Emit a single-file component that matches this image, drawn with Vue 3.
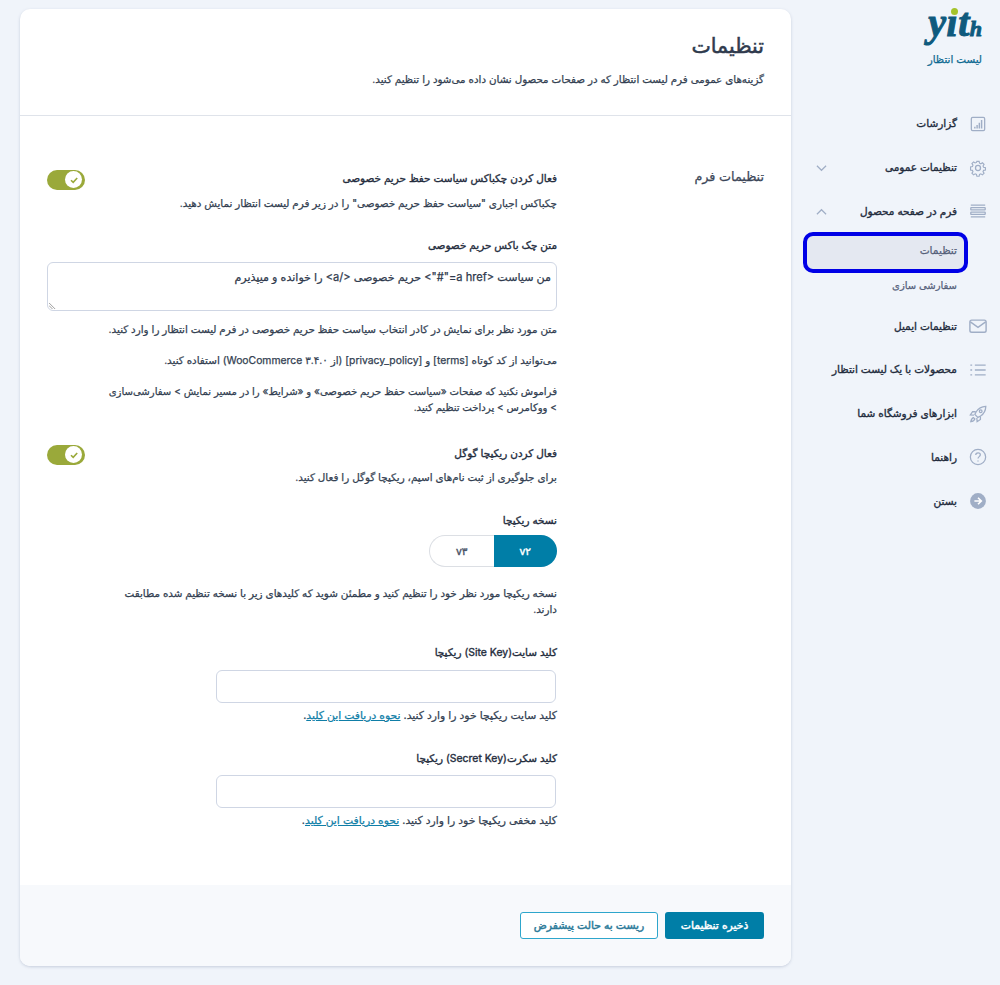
<script setup>
const menu = [
  { t: 'گزارشات', i: 'chart' },
  { t: 'تنظیمات عمومی', i: 'gear', chev: 'down' },
  { t: 'فرم در صفحه محصول', i: 'rows', chev: 'up', open: true },
  { t: 'تنظیمات ایمیل', i: 'mail' },
  { t: 'محصولات با یک لیست انتظار', i: 'list' },
  { t: 'ابزارهای فروشگاه شما', i: 'rocket' },
  { t: 'راهنما', i: 'help' },
  { t: 'بستن', i: 'close' }
]
</script>

<template>
  <div class="page" dir="rtl">
    <aside class="side">
      <div class="brand">
        <div class="logo" dir="ltr"><span>y</span><span class="idot">ı</span><span>t</span><span class="h">h</span></div>
        <div class="plug">لیست انتظار</div>
      </div>
      <nav class="nav">
        <template v-for="m in menu" :key="m.t">
          <div class="item">
            <svg class="ic" viewBox="0 0 20 20" fill="none" stroke="#a0aec6" stroke-width="1.4">
              <g v-if="m.i === 'chart'">
                <rect x="2.600" y="2.600" width="14.800" height="14.800" rx="1.500" />
                <path d="M6.500 15v-2M9 15v-4M11.500 15V8.500M14 15V5.500" stroke-width="1.600" />
              </g>
              <g v-else-if="m.i === 'gear'">
                <circle cx="10" cy="10" r="2.800" />
                <path d="M8.600 1.800h2.800l.5 2.300 1.600.7 2-1.300 2 2-1.300 2 .7 1.600 2.300.5v2.800l-2.300.5-.7 1.600 1.300 2-2 2-2-1.300-1.600.7-.5 2.300H8.600l-.5-2.300-1.600-.7-2 1.300-2-2 1.300-2-.7-1.600-2.300-.5V8.600l2.300-.5.7-1.600-1.300-2 2-2 2 1.300 1.600-.7z" transform="translate(1 1) scale(.9)" />
              </g>
              <g v-else-if="m.i === 'rows'">
                <path d="M2 3.500h16M2 16.500h16" />
                <rect x="2" y="6.200" width="16" height="2.600" rx=".4" />
                <rect x="2" y="11.200" width="16" height="2.600" rx=".4" />
              </g>
              <g v-else-if="m.i === 'mail'">
                <rect x="1" y="3.500" width="18" height="13.500" rx="2" stroke-width="1.600" />
                <path d="M1.500 5.500L10 11.500l8.500-6" stroke-width="1.600" />
              </g>
              <g v-else-if="m.i === 'list'">
                <path d="M6.500 4.500h12M6.500 10h12M6.500 15.500h12M1.500 4.500h2M1.500 10h2M1.500 15.500h2" stroke-width="1.400" />
              </g>
              <g v-else-if="m.i === 'rocket'">
                <path d="M18.500 1.500c-4.500.2-8 2.200-10.500 6l-1.500 3 3.300 3.300 3-1.500c3.800-2.500 5.700-6 5.900-10.800z" />
                <circle cx="13" cy="7" r="1.500" />
                <path d="M7.500 7.500H4L1.500 11l4 .3M12.700 12.500V16L9 18.500l-.3-4M5 14c-1.500.5-2.500 2-3 4.500 2.500-.5 4-1.500 4.500-3z" />
              </g>
              <g v-else-if="m.i === 'help'">
                <circle cx="10" cy="10" r="8.500" stroke-width="1.400" />
                <path d="M7.500 7.800c0-1.500 1.100-2.500 2.600-2.500s2.500 1 2.500 2.300c0 2-2.600 2-2.600 4.200" />
                <path d="M10 14v.9" stroke-width="1.500" />
              </g>
              <g v-else>
                <circle cx="10" cy="10" r="8.800" fill="#a0aec6" stroke="none" />
                <path d="M6 10h7.500M10 6.400L13.700 10 10 13.600" stroke="#fff" stroke-width="1.800" />
              </g>
            </svg>
            <span class="lbl">{{ m.t }}</span>
            <svg v-if="m.chev" class="chev" viewBox="0 0 12 8" fill="none" stroke="#a0aec6" stroke-width="1.300">
              <path :d="m.chev === 'down' ? 'M1 1.500l5 5 5-5' : 'M1 6.500l5-5 5 5'" />
            </svg>
          </div>
          <div v-if="m.open" class="subs">
            <div class="sub active">تنظیمات</div>
            <div class="sub plain">سفارشی سازی</div>
          </div>
        </template>
      </nav>
    </aside>

    <main class="card">
      <header class="head">
        <h1>تنظیمات</h1>
        <p>گزینه‌های عمومی فرم لیست انتظار که در صفحات محصول نشان داده می‌شود را تنظیم کنید.</p>
      </header>
      <section class="body">
        <h2>تنظیمات فرم</h2>
        <div class="fields">
          <div class="f-toggle">
            <label>فعال کردن چکباکس سیاست حفظ حریم خصوصی</label>
            <span class="toggle"><span class="knob"><svg viewBox="0 0 10 10" fill="none" stroke="#9aa93a" stroke-width="1.600"><path d="M2 5.200l2.200 2.200L8.200 3" /></svg></span></span>
          </div>
          <p class="d d1">چکباکس اجباری "سیاست حفظ حریم خصوصی" را در زیر فرم لیست انتظار نمایش دهید.</p>

          <label class="l2">متن چک باکس حریم خصوصی</label>
          <div class="ta">من سیاست &lt;a href="#"&gt; حریم خصوصی &lt;/a&gt; را خوانده و میپذیرم<svg class="grip" viewBox="0 0 8 8" stroke="#777" stroke-width=".8"><path d="M0 1l7 7M0 4l4 4" /></svg></div>
          <p class="d d3">متن مورد نظر برای نمایش در کادر انتخاب سیاست حفظ حریم خصوصی در فرم لیست انتظار را وارد کنید.</p>
          <p class="d d4">می‌توانید از کد کوتاه [terms] و [privacy_policy] (از WooCommerce ۳.۴.۰) استفاده کنید.</p>
          <p class="d d4 d7">فراموش نکنید که صفحات «سیاست حفظ حریم خصوصی» و «شرایط» را در مسیر نمایش &gt; سفارشی‌سازی &gt; ووکامرس &gt; پرداخت تنظیم کنید.</p>

          <div class="f-toggle t2">
            <label>فعال کردن ریکپچا گوگل</label>
            <span class="toggle"><span class="knob"><svg viewBox="0 0 10 10" fill="none" stroke="#9aa93a" stroke-width="1.600"><path d="M2 5.200l2.200 2.200L8.200 3" /></svg></span></span>
          </div>
          <p class="d d1b">برای جلوگیری از ثبت نام‌های اسپم، ریکپچا گوگل را فعال کنید.</p>

          <label class="l3">نسخه ریکپچا</label>
          <div class="seg"><span class="on">v۲</span><span class="off">v۳</span></div>
          <p class="d d5">نسخه ریکپچا مورد نظر خود را تنظیم کنید و مطمئن شوید که کلیدهای زیر با نسخه تنظیم شده مطابقت دارند.</p>

          <label class="l4">کلید سایت(Site Key) ریکپچا</label>
          <div class="inp"></div>
          <p class="d d6">کلید سایت ریکپچا خود را وارد کنید. <a>نحوه دریافت این کلید</a>.</p>

          <label class="l5">کلید سکرت(Secret Key) ریکپچا</label>
          <div class="inp i2"></div>
          <p class="d d6">کلید مخفی ریکپچا خود را وارد کنید. <a>نحوه دریافت این کلید</a>.</p>
        </div>
      </section>
      <footer class="foot">
        <button class="save">ذخیره تنظیمات</button>
        <button class="reset">ریست به حالت پیشفرض</button>
      </footer>
    </main>
  </div>
</template>

<style>
html, body { margin: 0; background: #f0f4fa; }
</style>

<style scoped>
.page {
  display: flex;
  align-items: flex-start;
  width: 1000px;
  height: 985px;
  overflow: hidden;
  font-family: "Inter", "DejaVu Sans", sans-serif;
  color: #2f3a4d;
  -webkit-text-stroke: .25px currentColor;
}
.side { width: 209px; flex: none; }
.brand { padding: 0 18px 0 0; height: 102px; box-sizing: border-box; }
.logo {
  font-family: "Liberation Serif", serif;
  font-style: italic;
  font-weight: 700;
  font-size: 40px;
  line-height: 45px;
  height: 52px;
  color: #0f5a7d;
  -webkit-text-stroke: 1px #0f5a7d;
  text-align: right;
  letter-spacing: .5px;
  white-space: nowrap;
}
.logo .h { font-size: 22px; letter-spacing: 0; }
.idot { position: relative; }
.idot::after {
  content: "";
  position: absolute;
  left: 4px;
  top: 8px;
  width: 7px;
  height: 7px;
  border-radius: 50%;
  background: #a4c32b;
}
.plug { font-size: 10.400px; color: #0f6a92; line-height: 16px; }
.nav { display: flex; flex-direction: column; }
.item {
  display: flex;
  align-items: center;
  height: 43.750px;
  padding-right: 13px;
  position: relative;
}
.ic { width: 18px; height: 18px; flex: none; margin-left: 12px; }
.lbl { font-size: 10.500px; color: #232c3d; white-space: nowrap; -webkit-text-stroke-width: .35px; }
.chev { position: absolute; left: 25px; top: 18px; width: 11px; height: 8px; }
.sub {
  color: #56617a;
  box-sizing: border-box;
  padding-right: 7px;
  white-space: nowrap;
}
.sub.active {
  font-size: 10.600px;
  height: 33px;
  line-height: 29px;
  margin: 3px 36px 0 16px;
  background: #e4e8f1;
  border-radius: 6px;
  outline: 4px solid #0000e6;
}
.sub.plain {
  font-size: 10px;
  margin: 0 36px 0 16px;
  height: 35px;
  line-height: 32px;
}

.card {
  width: 771px;
  margin: 9px 0 0 20px;
  height: 957px;
  box-sizing: border-box;
  background: #fff;
  border-radius: 10px;
  box-shadow: 0 1px 3px rgba(120, 135, 165, .35);
  display: flex;
  flex-direction: column;
  overflow: hidden;
}
.head { height: 107px; flex: none; box-sizing: border-box; padding: 24px 27px 0; border-bottom: 1px solid #dfe3ea; }
h1 { margin: 0; font-size: 20.600px; line-height: 26px; font-weight: 400; color: #2f3a4d; -webkit-text-stroke-width: .5px; }
.head p { margin: 12px 0 0; font-size: 10.330px; line-height: 16px; color: #333f52; }
.body { flex: 1; display: flex; padding: 0 27px 0 47px; min-height: 0; }
h2 { width: 207px; flex: none; margin: 51px 0 0; font-size: 12.750px; line-height: 20px; font-weight: 400; color: #3c4759; }
.fields { width: 510px; flex: none; padding-top: 54px; }
label { display: block; font-size: 10.450px; line-height: 16px; color: #232c3d; -webkit-text-stroke-width: .35px; }
.f-toggle { display: flex; justify-content: space-between; align-items: center; height: 20px; }
.f-toggle label { margin-bottom: 2px; }
.toggle { width: 38px; height: 20px; border-radius: 10px; background: #9aa93a; position: relative; display: block; margin-top: -1px; }
.knob { position: absolute; left: 18px; top: 1.500px; width: 17px; height: 17px; border-radius: 50%; background: #fff; display: flex; align-items: center; justify-content: center; }
.knob svg { width: 10px; height: 10px; }
.d { margin: 0; font-size: 10.360px; line-height: 16px; color: #333f52; max-width: 450px; }
.d7 { font-size: 10.100px; max-width: 455px; }
.d1 { margin-top: 5px; }
.l2 { margin-top: 27px; }
.ta {
  margin-top: 8px;
  height: 49px;
  box-sizing: border-box;
  border: 1px solid #cfd6e4;
  border-radius: 6px;
  padding: 6px 5px;
  font-size: 11.100px;
  line-height: 17px;
  position: relative;
}
.grip { position: absolute; left: 1px; bottom: 1px; width: 7px; height: 7px; }
.d3 { margin-top: 10px; }
.d4 { margin-top: 15px; }
.t2 { margin-top: 30px; }
.d1b { margin-top: 4px; }
.l3 { margin-top: 28px; }
.seg {
  display: flex;
  width: 128px;
  height: 32px;
  margin-top: 6px;
  font-size: 10.500px;
}
.seg span { flex: 1; display: flex; align-items: center; justify-content: center; direction: ltr; box-sizing: border-box; }
.seg .on { background: #007ea7; color: #fff; border-radius: 0 16px 16px 0; -webkit-text-stroke-width: .4px; }
.seg .off { color: #4a5568; border: 1px solid #dcdfe4; border-right: 0; border-radius: 16px 0 0 16px; -webkit-text-stroke-width: .4px; }
.d5 { margin-top: 18px; }
.l4 { margin-top: 28px; }
.inp { width: 340px; height: 33px; margin-top: 9px; margin-right: 1px; box-sizing: border-box; border: 1px solid #cfd6e4; border-radius: 6px; }
.i2 { margin-top: 8px; }
.d6 { margin-top: 5px; font-size: 10.800px; }
.d6 a { color: #0f7ea7; text-decoration: underline; }
.l5 { margin-top: 27px; }
.foot {
  height: 81px;
  flex: none;
  background: #f7f9fc;
  box-sizing: border-box;
  padding: 27px 27px 0;
  display: flex;
  gap: 7px;
  align-items: flex-start;
}
button { font-family: inherit; font-size: 10.800px; height: 27px; border-radius: 3px; padding: 0; box-sizing: border-box; white-space: nowrap; -webkit-text-stroke-width: .45px; }
.save { width: 99px; background: #007ea7; color: #fff; border: 0; }
.reset { width: 138px; background: #fff; color: #2b7a99; border: 1px solid #2ea6cc; }
</style>
